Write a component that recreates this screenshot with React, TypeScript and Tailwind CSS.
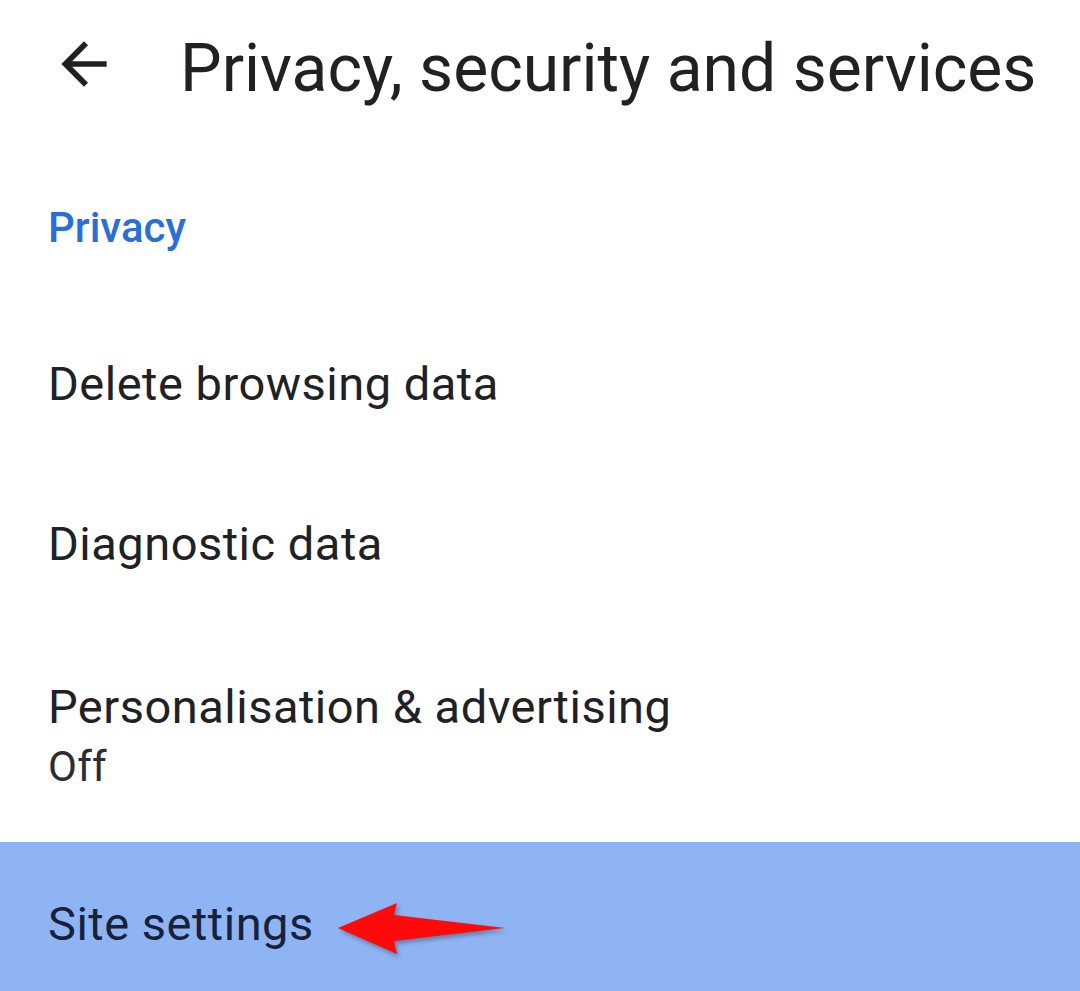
import React from "react";

function BackArrow() {
  return (
    <svg width="68" height="68" viewBox="0 0 24 24" fill="#202124" aria-hidden="true">
      <path d="M20 11H7.83l5.59-5.59L12 4l-8 8 8 8 1.41-1.41L7.83 13H20v-2z" />
    </svg>
  );
}

function RedArrow() {
  return (
    <svg
      width="185"
      height="70"
      viewBox="0 0 185 70"
      className="absolute left-[330px] top-[53px] drop-shadow-[2px_3px_2px_rgba(0,0,0,0.3)]"
      aria-hidden="true"
    >
      <polygon points="8,33 67,8 64,20 175,33 64,46 67,59" fill="#ff0a0a" />
    </svg>
  );
}

export default function App() {
  return (
    <div className="w-[1080px] h-[991px] overflow-hidden bg-white font-['Roboto',sans-serif] text-[#202124]">
      <div className="pt-[29px] pb-[46px]">
        <div className="flex items-start">
          <div className="ml-[50px] mt-[1px] w-[68px] h-[68px]">
            <BackArrow />
          </div>
          <h1 className="ml-[62px] text-[66px] leading-[80px] font-normal whitespace-nowrap">
            Privacy, security and services
          </h1>
        </div>
        <div className="mt-[93px] pl-[48px] text-[42px] leading-[52px] font-medium text-[#2a6fd8]">
          Privacy
        </div>
      </div>

      <div className="pl-[48px] pt-[56px] pb-[48px] text-[47px] leading-[56px] tracking-[0.5px]">
        Delete browsing data
      </div>
      <div className="pl-[48px] pt-[56px] pb-[48px] text-[47px] leading-[56px] tracking-[0.5px]">
        Diagnostic data
      </div>
      <div className="pl-[48px] pt-[59px] pb-[43px]">
        <div className="text-[47px] leading-[56px] tracking-[0.5px]">Personalisation &amp; advertising</div>
        <div className="text-[42px] leading-[64px] tracking-[0.3px] text-[#2b2d31]">Off</div>
      </div>
      <div className="relative bg-[#8fb4f4] pl-[48px] pt-[54px] pb-[60px] text-[47px] leading-[56px] tracking-[0.5px] text-[#17223a]">
        Site settings
        <RedArrow />
      </div>
    </div>
  );
}
